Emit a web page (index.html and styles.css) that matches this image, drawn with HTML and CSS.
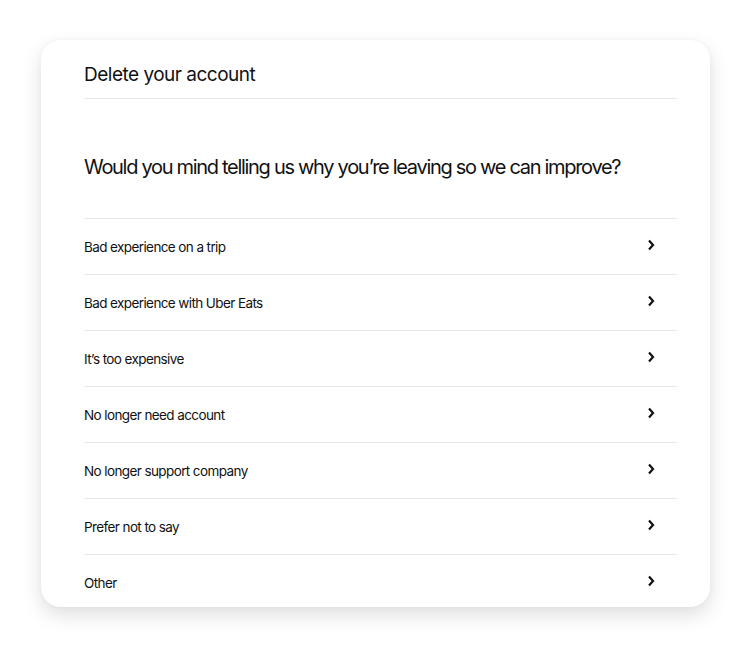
FILE: index.html
```html
<!DOCTYPE html>
<html lang="en">
<head>
    <meta charset="UTF-8">
    <meta name="viewport" content="width=device-width, initial-scale=1.0">
    <title>Delete your account</title>
    <link rel="stylesheet" href="styles.css">
</head>
<body>
    <div class="card">
        <h1 class="card-title">Delete your account</h1>
        <h2 class="question">Would you mind telling us why you’re leaving so we can improve?</h2>
        <ul class="reasons">
            <li class="reason"><span>Bad experience on a trip</span><svg class="chevron" viewBox="0 0 8 12"><path d="M2 1.5 6 6l-4 4.5"/></svg></li>
            <li class="reason"><span>Bad experience with Uber Eats</span><svg class="chevron" viewBox="0 0 8 12"><path d="M2 1.5 6 6l-4 4.5"/></svg></li>
            <li class="reason"><span>It’s too expensive</span><svg class="chevron" viewBox="0 0 8 12"><path d="M2 1.5 6 6l-4 4.5"/></svg></li>
            <li class="reason"><span>No longer need account</span><svg class="chevron" viewBox="0 0 8 12"><path d="M2 1.5 6 6l-4 4.5"/></svg></li>
            <li class="reason"><span>No longer support company</span><svg class="chevron" viewBox="0 0 8 12"><path d="M2 1.5 6 6l-4 4.5"/></svg></li>
            <li class="reason"><span>Prefer not to say</span><svg class="chevron" viewBox="0 0 8 12"><path d="M2 1.5 6 6l-4 4.5"/></svg></li>
            <li class="reason"><span>Other</span><svg class="chevron" viewBox="0 0 8 12"><path d="M2 1.5 6 6l-4 4.5"/></svg></li>
        </ul>
    </div>
</body>
</html>
```

FILE: styles.css
```css
body {
    margin: 0;
    padding: 40px 40px 43px 41px;
    background: #ffffff;
    font-family: Inter, "Noto Sans", sans-serif;
    color: #111111;
}

.card {
    width: 669px;
    height: 567px;
    box-sizing: border-box;
    padding: 21px 33px 0 43px;
    background: #ffffff;
    border-radius: 20px;
    box-shadow: 0 8px 20px rgba(0, 0, 0, 0.13), 0 0 6px rgba(0, 0, 0, 0.03);
    overflow: hidden;
}

.card-title {
    margin: 0;
    padding-bottom: 9px;
    border-bottom: 1px solid #e8e8e8;
    font-size: 19px;
    font-weight: 400;
    line-height: 28px;
    letter-spacing: -0.5px;
}

.question {
    margin: 0;
    padding: 54px 0 37px;
    border-bottom: 1px solid #e8e8e8;
    font-size: 20px;
    font-weight: 400;
    line-height: 28px;
    letter-spacing: -1.3px;
    white-space: nowrap;
}

.reasons {
    list-style: none;
    margin: 0;
    padding: 0;
}

.reason {
    display: flex;
    align-items: center;
    justify-content: space-between;
    height: 55px;
    border-bottom: 1px solid #e8e8e8;
    font-size: 13.5px;
    letter-spacing: -0.6px;
}

.reason:last-child {
    border-bottom: none;
}

.chevron {
    width: 8px;
    height: 12px;
    margin: 0 22px 3px 0;
    fill: none;
    stroke: #111111;
    stroke-width: 2.2;
}
```
